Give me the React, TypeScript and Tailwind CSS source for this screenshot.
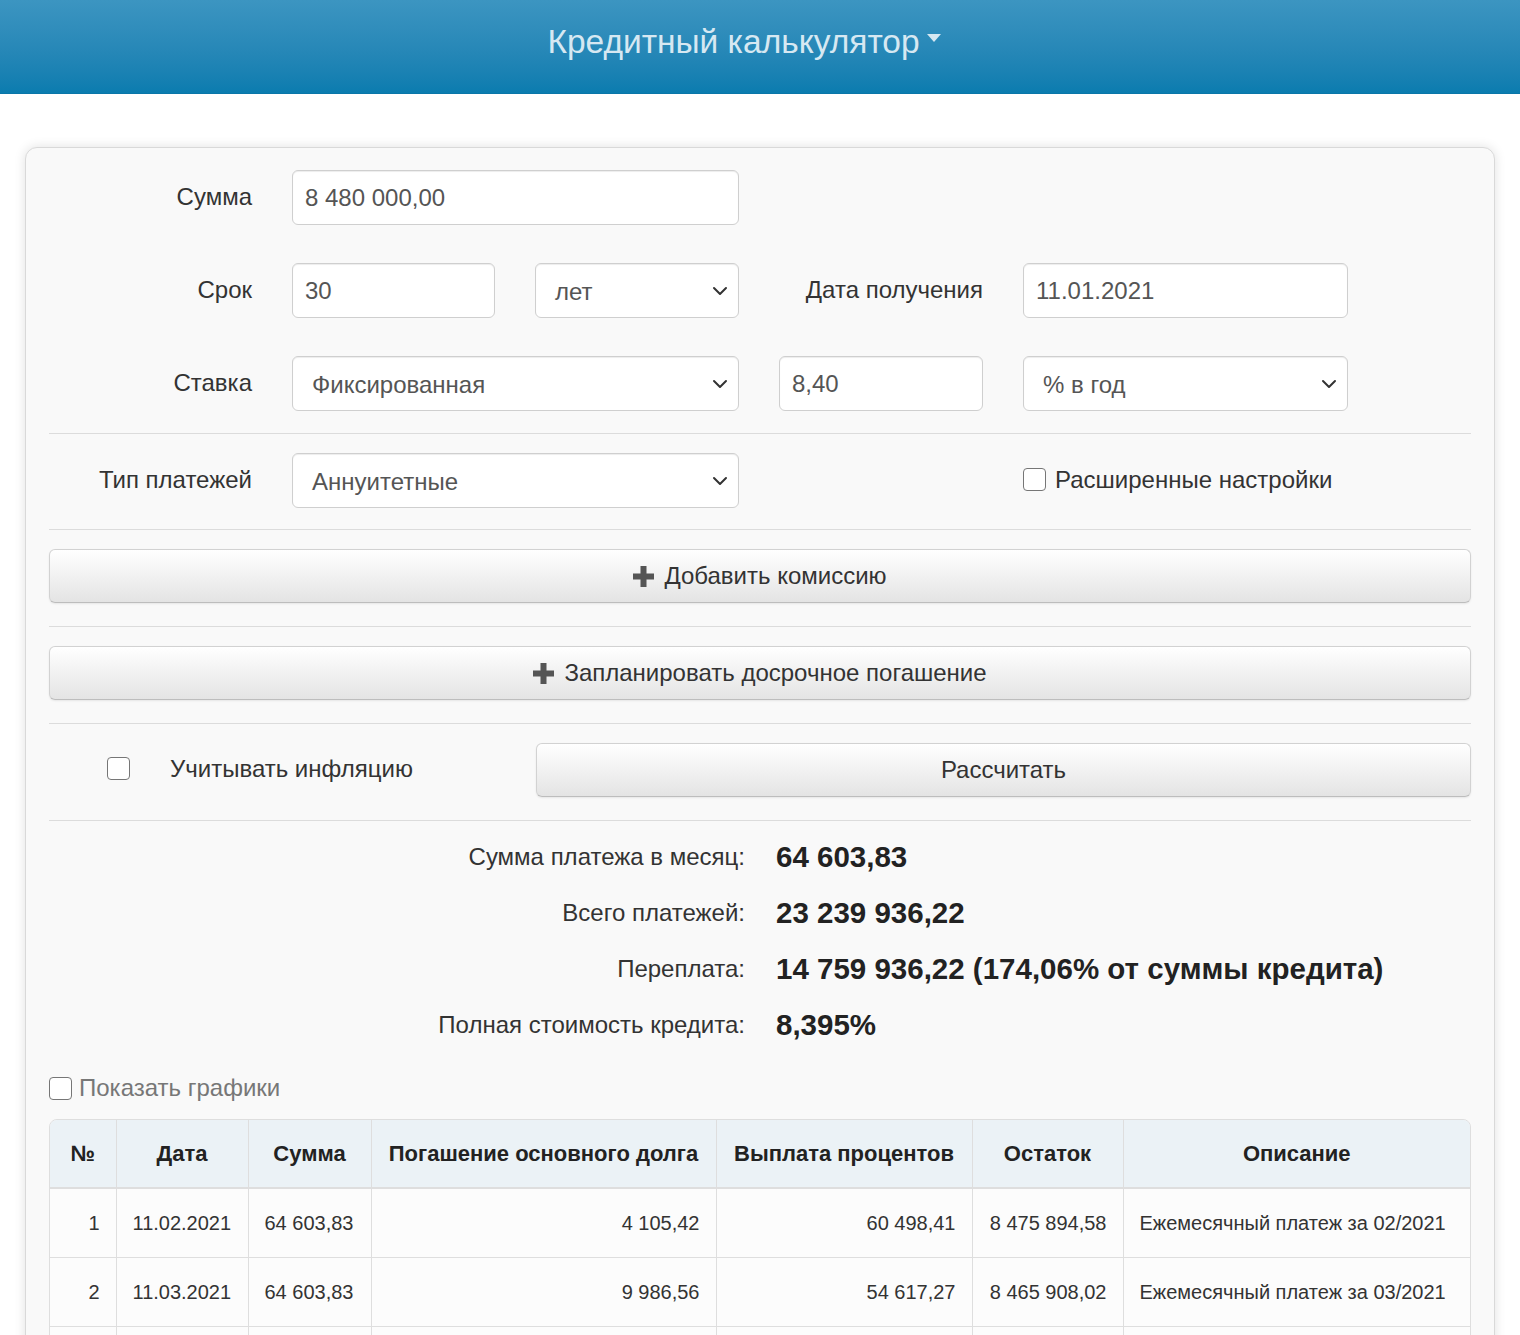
import React from "react";

const font = { fontFamily: '"Liberation Sans", Arial, sans-serif' };

function Chevron() {
  return (
    <svg width="16" height="10" viewBox="0 0 16 10" className="shrink-0">
      <path d="M2 2l6 6 6-6" fill="none" stroke="#333" strokeWidth="2" strokeLinecap="round" strokeLinejoin="round" />
    </svg>
  );
}

function Plus() {
  return (
    <svg width="21" height="21" viewBox="0 0 21 21" className="shrink-0">
      <path d="M7.5 0h6v7.5H21v6h-7.5V21h-6v-7.5H0v-6h7.5z" fill="#555" />
    </svg>
  );
}

function Input({ value }: { value: string }) {
  return (
    <div className="h-[55px] flex items-center bg-white border border-[#cfcfcf] rounded-[6px] px-[12px] text-[24px] text-[#555] shadow-[inset_0_1px_1px_rgba(0,0,0,0.075)]">
      {value}
    </div>
  );
}

function Select({ value }: { value: string }) {
  return (
    <div className="h-[55px] flex items-center justify-between bg-white border border-[#cfcfcf] rounded-[6px] pl-[19px] pr-[10px] text-[24px] text-[#555] shadow-[inset_0_1px_1px_rgba(0,0,0,0.075)]">
      <span className="pt-[2px]">{value}</span>
      <Chevron />
    </div>
  );
}

function Check() {
  return <span className="w-[23px] h-[23px] bg-white border border-[#767676] rounded-[4px] shrink-0" />;
}

function Label({ children }: { children: React.ReactNode }) {
  return <div className="flex items-center justify-end text-[24px] text-[#333] h-[55px] -mt-[1px]">{children}</div>;
}

function Button({ children, className = "" }: { children: React.ReactNode; className?: string }) {
  return (
    <div
      className={`h-[54px] flex items-center justify-center gap-[10px] rounded-[6px] border border-[#d2d2d2] border-b-[#bdbdbd] bg-gradient-to-b from-white to-[#e4e4e4] text-[24px] text-[#333] shadow-[0_1px_2px_rgba(0,0,0,0.08)] ${className}`}
    >
      {children}
    </div>
  );
}

function Hr({ top = 22 }: { top?: number }) {
  const cls = top === 21 ? "mt-[21px] mb-[19px]" : top === 23 ? "mt-[23px] mb-[19px]" : "mt-[22px] mb-[19px]";
  return (
    <div className={cls}>
      <div className="h-px bg-[#dcdcdc]" />
    </div>
  );
}

const rows = [
  ["1", "11.02.2021", "64 603,83", "4 105,42", "60 498,41", "8 475 894,58", "Ежемесячный платеж за 02/2021"],
  ["2", "11.03.2021", "64 603,83", "9 986,56", "54 617,27", "8 465 908,02", "Ежемесячный платеж за 03/2021"],
  ["3", "11.04.2021", "64 603,83", "4 205,95", "60 397,88", "8 461 702,07", "Ежемесячный платеж за 04/2021"],
];

const results = [
  ["Сумма платежа в месяц:", "64 603,83"],
  ["Всего платежей:", "23 239 936,22"],
  ["Переплата:", "14 759 936,22 (174,06% от суммы кредита)"],
  ["Полная стоимость кредита:", "8,395%"],
];

export default function App() {
  return (
    <div className="min-h-screen bg-white overflow-hidden" style={font}>
      <div className="h-[94px] bg-gradient-to-b from-[#3c95c1] to-[#0a7caf] border-b border-[#0a76a8] flex items-center justify-center">
        <div className="flex items-center gap-[7px] text-[33.5px] text-[#d6e8f2] -mt-[8px] ml-[-32px]">
          <span>Кредитный калькулятор</span>
          <svg width="14" height="8" viewBox="0 0 14 8" className="-mt-[10px]">
            <path d="M0 0h14L7 8z" fill="#d6e8f2" />
          </svg>
        </div>
      </div>

      <div className="ml-[25px] w-[1470px] mt-[53px] bg-[#f9f9f9] border border-[#d9d9d9] rounded-[12px] shadow-[0_0_12px_rgba(0,0,0,0.12)] px-[23px] pt-[22px] pb-[40px]">
        <div className="grid grid-cols-[203px_203px_204px_204px_325px] gap-x-[40px] gap-y-[38px]">
          <Label>Сумма</Label>
          <div className="col-span-2">
            <Input value="8 480 000,00" />
          </div>
          <div />
          <div />

          <Label>Срок</Label>
          <Input value="30" />
          <Select value="лет" />
          <Label>Дата получения</Label>
          <Input value="11.01.2021" />

          <Label>Ставка</Label>
          <div className="col-span-2">
            <Select value="Фиксированная" />
          </div>
          <Input value="8,40" />
          <Select value="% в год" />
        </div>

        <Hr />

        <div className="grid grid-cols-[203px_203px_204px_204px_325px] gap-x-[40px]">
          <Label>Тип платежей</Label>
          <div className="col-span-2">
            <Select value="Аннуитетные" />
          </div>
          <div />
          <div className="flex items-center gap-[9px] text-[24px] text-[#333] -mt-[2px]">
            <Check />
            <span>Расширенные настройки</span>
          </div>
        </div>

        <Hr top={21} />

        <Button>
          <Plus />
          <span>Добавить комиссию</span>
        </Button>

        <Hr top={23} />

        <Button>
          <Plus />
          <span>Запланировать досрочное погашение</span>
        </Button>

        <Hr top={23} />

        <div className="flex items-center">
          <div className="w-[487px] flex items-center text-[24px] text-[#333] pl-[58px] -mt-[3px]">
            <Check />
            <span className="ml-[40px]">Учитывать инфляцию</span>
          </div>
          <Button className="flex-1">
            <span>Рассчитать</span>
          </Button>
        </div>

        <div className="mt-[23px] mb-[8px]">
          <div className="h-px bg-[#dcdcdc]" />
        </div>

        <div className="grid grid-cols-[696px_1fr] gap-x-[31px]">
          {results.map(([k, v]) => (
            <React.Fragment key={k}>
              <div className="h-[56px] flex items-center justify-end text-[24px] text-[#333]">{k}</div>
              <div className="h-[56px] flex items-center text-[29.5px] font-bold text-[#222]">{v}</div>
            </React.Fragment>
          ))}
        </div>

        <div className="mt-[21px] h-[28px] flex items-center gap-[7px] text-[24px] text-[#777]">
          <Check />
          <span>Показать графики</span>
        </div>

        <div className="mt-[17px] border border-[#dedede] rounded-t-[8px] overflow-hidden">
          <table className="w-full table-fixed border-collapse text-[#333]">
            <colgroup>
              <col className="w-[66px]" />
              <col className="w-[132px]" />
              <col className="w-[123px]" />
              <col className="w-[345px]" />
              <col className="w-[256px]" />
              <col className="w-[151px]" />
              <col />
            </colgroup>
            <thead>
              <tr className="bg-[#ebf2f6] h-[68px] border-b-2 border-[#dedede]">
                {["№", "Дата", "Сумма", "Погашение основного долга", "Выплата процентов", "Остаток", "Описание"].map((h, i) => (
                  <th key={h} className={`text-[22px] font-bold text-center text-[#222] whitespace-nowrap ${i > 0 ? "border-l border-[#dedede]" : ""}`}>
                    {h}
                  </th>
                ))}
              </tr>
            </thead>
            <tbody>
              {rows.map((r) => (
                <tr key={r[0]} className="h-[69px] bg-[#fcfcfc] border-t border-[#dedede]">
                  <td className="text-[20px] text-right px-[16px]">{r[0]}</td>
                  <td className="text-[20px] text-left px-[16px] border-l border-[#dedede]">{r[1]}</td>
                  <td className="text-[20px] text-left px-[16px] border-l border-[#dedede]">{r[2]}</td>
                  <td className="text-[20px] text-right px-[16px] border-l border-[#dedede]">{r[3]}</td>
                  <td className="text-[20px] text-right px-[16px] border-l border-[#dedede]">{r[4]}</td>
                  <td className="text-[20px] text-right px-[16px] border-l border-[#dedede] whitespace-nowrap">{r[5]}</td>
                  <td className="text-[20px] text-left px-[16px] border-l border-[#dedede] whitespace-nowrap">{r[6]}</td>
                </tr>
              ))}
            </tbody>
          </table>
        </div>
      </div>
    </div>
  );
}
